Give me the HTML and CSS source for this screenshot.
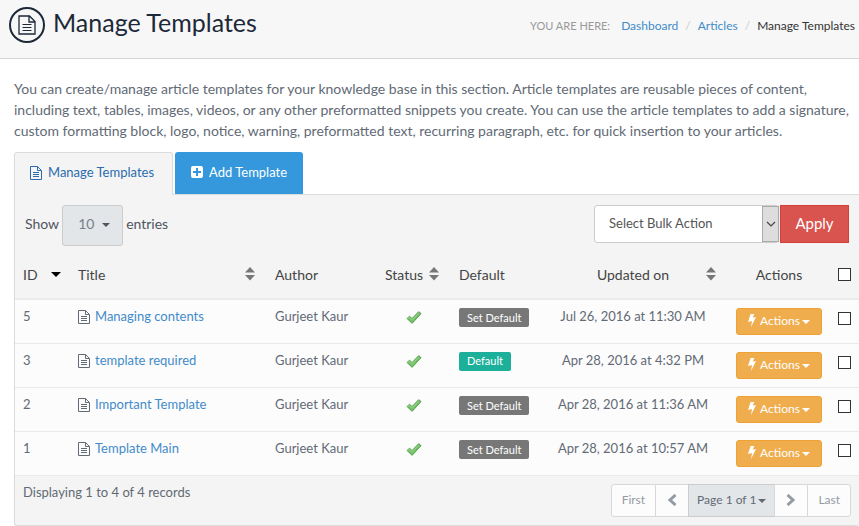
FILE: index.html
```html
<!DOCTYPE html>
<html lang="en">
<head>
    <meta charset="UTF-8">
    <meta name="viewport" content="width=device-width, initial-scale=1.0">
    <title>Manage Templates</title>
    <link rel="stylesheet" href="styles.css">
</head>
<body>
    <!-- shared icons -->
    <svg class="sprite" aria-hidden="true">
        <symbol id="i-file" viewBox="0 0 12 14">
            <path d="M.5.5h7l4 4v9H.5zM7.5.5v4h4" fill="none" stroke="currentColor"/>
            <path d="M3 6.5h6M3 8.5h6M3 10.5h6" stroke="currentColor"/>
        </symbol>
        <symbol id="i-page" viewBox="0 0 18 20">
            <path d="M1 1h10.500l5.500 5.500V19H1zM11 1v6h6" fill="none" stroke="currentColor" stroke-width="1.300"/>
            <path d="M4.500 9.500h9M4.500 12.500h9M4.500 15.500h9" stroke="currentColor"/>
        </symbol>
        <symbol id="i-plus" viewBox="0 0 12 12">
            <path fill-rule="evenodd" d="M2 0h8a2 2 0 0 1 2 2v8a2 2 0 0 1-2 2H2a2 2 0 0 1-2-2V2a2 2 0 0 1 2-2zM5 2v3H2v2h3v3h2V7h3V5H7V2z" fill="currentColor"/>
        </symbol>
        <symbol id="i-caret" viewBox="0 0 8 4">
            <path d="M0 0h8L4 4z" fill="currentColor"/>
        </symbol>
        <symbol id="i-sort" viewBox="0 0 10 14">
            <path d="M0 5.500h10L5 0zM0 8h10l-5 5.500z" fill="currentColor"/>
        </symbol>
        <symbol id="i-bolt" viewBox="0 0 8 13">
            <path d="M2.600 0h3.600L4.800 3.800 8 3.100 3 13l1-6-4 1z" fill="currentColor"/>
        </symbol>
        <symbol id="i-check" viewBox="0 0 14 12">
            <path d="M.600 7L2.800 4.800l2.400 2.100L11.300.600l2.200 1.800L5.300 11.400z" fill="#6cc25f" stroke="#4f9148" stroke-width=".8"/>
            <path d="M1.900 6.900l1-.9 2.400 2.200L11.500 1.900" fill="none" stroke="#8fd382"/>
        </symbol>
        <symbol id="i-prev" viewBox="0 0 10 12">
            <path d="M8.500 1L3 6l5.500 5" fill="none" stroke="currentColor" stroke-width="3"/>
        </symbol>
        <symbol id="i-next" viewBox="0 0 10 12">
            <path d="M1.500 1L7 6l-5.500 5" fill="none" stroke="currentColor" stroke-width="3"/>
        </symbol>
        <symbol id="i-down" viewBox="0 0 10 6">
            <path d="M1 1l4 4 4-4" fill="none" stroke="currentColor" stroke-width="1.200"/>
        </symbol>
    </svg>

    <header class="page-header">
        <h1><span class="circle"><svg width="18" height="20"><use href="#i-page"/></svg></span>Manage Templates</h1>
        <nav class="breadcrumb">
            <span class="here">YOU ARE HERE:</span>
            <a href="#">Dashboard</a>
            <span class="sep">/</span>
            <a href="#">Articles</a>
            <span class="sep">/</span>
            <span class="current">Manage Templates</span>
        </nav>
    </header>

    <main>
        <p class="intro">You can create/manage article templates for your knowledge base in this section. Article templates are reusable pieces of content, including text, tables, images, videos, or any other preformatted snippets you create. You can use the article templates to add a signature, custom formatting block, logo, notice, warning, preformatted text, recurring paragraph, etc. for quick insertion to your articles.</p>

        <nav class="tabs">
            <a class="tab active" href="#"><svg width="12" height="14"><use href="#i-file"/></svg>Manage Templates</a>
            <a class="tab add" href="#"><svg width="12" height="12"><use href="#i-plus"/></svg>Add Template</a>
        </nav>

        <section class="panel">
            <div class="toolbar">
                <div class="length">
                    <label for="length">Show</label>
                    <span class="select-wrap">
                        <select id="length">
                            <option>10</option>
                            <option>25</option>
                            <option>50</option>
                        </select>
                        <svg class="caret" width="8" height="4"><use href="#i-caret"/></svg>
                    </span>
                    <span>entries</span>
                </div>
                <form class="bulk">
                    <span class="select-wrap">
                        <select id="bulk" aria-label="Select Bulk Action">
                            <option>Select Bulk Action</option>
                            <option>Delete</option>
                        </select>
                        <span class="arrow"><svg width="10" height="6"><use href="#i-down"/></svg></span>
                    </span>
                    <button type="button" class="apply">Apply</button>
                </form>
            </div>

            <table>
                <colgroup>
                    <col class="c-id"><col class="c-title"><col class="c-author"><col class="c-status"><col class="c-default"><col class="c-updated"><col class="c-actions"><col class="c-check">
                </colgroup>
                <thead>
                    <tr>
                        <th>ID<svg class="sort desc" width="10" height="5"><use href="#i-caret"/></svg></th>
                        <th>Title<svg class="sort" width="10" height="14"><use href="#i-sort"/></svg></th>
                        <th>Author</th>
                        <th>Status<svg class="sort" width="10" height="14"><use href="#i-sort"/></svg></th>
                        <th>Default</th>
                        <th class="center">Updated on<svg class="sort" width="10" height="14"><use href="#i-sort"/></svg></th>
                        <th class="center">Actions</th>
                        <th><input type="checkbox" aria-label="Select all"></th>
                    </tr>
                </thead>
                <tbody>
                    <tr>
                        <td>5</td>
                        <td><svg class="file" width="12" height="14"><use href="#i-file"/></svg><a href="#">Managing contents</a></td>
                        <td>Gurjeet Kaur</td>
                        <td class="center"><svg class="check" width="16" height="13"><use href="#i-check"/></svg></td>
                        <td><button type="button" class="label">Set Default</button></td>
                        <td class="center">Jul 26, 2016 at 11:30 AM</td>
                        <td><button type="button" class="actions"><svg width="8" height="13"><use href="#i-bolt"/></svg>Actions<svg class="caret" width="8" height="4"><use href="#i-caret"/></svg></button></td>
                        <td><input type="checkbox" aria-label="Select template 5"></td>
                    </tr>
                    <tr>
                        <td>3</td>
                        <td><svg class="file" width="12" height="14"><use href="#i-file"/></svg><a href="#">template required</a></td>
                        <td>Gurjeet Kaur</td>
                        <td class="center"><svg class="check" width="16" height="13"><use href="#i-check"/></svg></td>
                        <td><span class="label is-default">Default</span></td>
                        <td class="center">Apr 28, 2016 at 4:32 PM</td>
                        <td><button type="button" class="actions"><svg width="8" height="13"><use href="#i-bolt"/></svg>Actions<svg class="caret" width="8" height="4"><use href="#i-caret"/></svg></button></td>
                        <td><input type="checkbox" aria-label="Select template 3"></td>
                    </tr>
                    <tr>
                        <td>2</td>
                        <td><svg class="file" width="12" height="14"><use href="#i-file"/></svg><a href="#">Important Template</a></td>
                        <td>Gurjeet Kaur</td>
                        <td class="center"><svg class="check" width="16" height="13"><use href="#i-check"/></svg></td>
                        <td><button type="button" class="label">Set Default</button></td>
                        <td class="center">Apr 28, 2016 at 11:36 AM</td>
                        <td><button type="button" class="actions"><svg width="8" height="13"><use href="#i-bolt"/></svg>Actions<svg class="caret" width="8" height="4"><use href="#i-caret"/></svg></button></td>
                        <td><input type="checkbox" aria-label="Select template 2"></td>
                    </tr>
                    <tr>
                        <td>1</td>
                        <td><svg class="file" width="12" height="14"><use href="#i-file"/></svg><a href="#">Template Main</a></td>
                        <td>Gurjeet Kaur</td>
                        <td class="center"><svg class="check" width="16" height="13"><use href="#i-check"/></svg></td>
                        <td><button type="button" class="label">Set Default</button></td>
                        <td class="center">Apr 28, 2016 at 10:57 AM</td>
                        <td><button type="button" class="actions"><svg width="8" height="13"><use href="#i-bolt"/></svg>Actions<svg class="caret" width="8" height="4"><use href="#i-caret"/></svg></button></td>
                        <td><input type="checkbox" aria-label="Select template 1"></td>
                    </tr>
                </tbody>
            </table>

            <div class="table-footer">
                <span>Displaying 1 to 4 of 4 records</span>
                <div class="pagination">
                    <button type="button">First</button>
                    <button type="button" aria-label="Previous"><svg width="10" height="12"><use href="#i-prev"/></svg></button>
                    <button type="button" class="page">Page 1 of 1<svg class="caret" width="8" height="4"><use href="#i-caret"/></svg></button>
                    <button type="button" aria-label="Next"><svg width="10" height="12"><use href="#i-next"/></svg></button>
                    <button type="button">Last</button>
                </div>
            </div>
        </section>
    </main>
</body>
</html>
```
FILE: styles.css
```css
* {
    box-sizing: border-box;
}
body {
    margin: 0;
    font-family: Lato, "Liberation Sans", sans-serif;
    font-size: 14px;
    line-height: 21px;
    color: #626a75;
    background-color: #ffffff;
}
a {
    color: #428bca;
    text-decoration: none;
}
a:hover {
    text-decoration: underline;
}
button, select, input {
    font-family: inherit;
    margin: 0;
}
button {
    cursor: pointer;
}
.sprite {
    display: none;
}
.page-header {
    display: flex;
    justify-content: space-between;
    align-items: flex-start;
    height: 59px;
    padding: 7px 4px 0 9px;
    background-color: #f7f7f7;
    border-bottom: 1px solid #d5d5d5;
}
h1 {
    display: flex;
    gap: 8px;
    margin: 0;
    font-size: 25px;
    line-height: 30px;
    font-weight: 400;
    color: #1d2939;
}
.circle {
    display: flex;
    align-items: center;
    justify-content: center;
    width: 36px;
    height: 36px;
    border: 2px solid #1d2939;
    border-radius: 50%;
}
.breadcrumb {
    display: flex;
    gap: 7px;
    padding-top: 8px;
    font-size: 12px;
}
.here {
    margin-right: 4px;
    font-size: 11px;
    color: #999999;
}
.sep {
    color: #cccccc;
}
.current {
    color: #333333;
}
main {
    padding: 19px 0 0 14px;
}
.intro {
    margin: 0 0 11px;
}
.tabs {
    display: flex;
    gap: 2px;
}
.tab {
    display: flex;
    align-items: center;
    gap: 6px;
    height: 42px;
    padding: 0 16px 2px;
    font-size: 13px;
    border-radius: 3px 3px 0 0;
}
.tab.active {
    position: relative;
    z-index: 1;
    height: 43px;
    margin-bottom: -1px;
    padding: 0 18px 3px 15px;
    color: #2a6cae;
    background-color: #f4f4f4;
    border: 1px solid #d9dbdd;
    border-bottom: 0;
}
.tab.add {
    color: #ffffff;
    background-color: #3598dc;
}
.panel {
    background-color: #f4f4f4;
    border: 1px solid #d9dbdd;
    border-right: 0;
    border-radius: 0 0 3px 3px;
}
.toolbar {
    display: flex;
    justify-content: space-between;
    height: 56px;
    padding: 10px 10px 0;
}
.length {
    display: flex;
    align-items: center;
    gap: 3px;
    height: 41px;
    padding-bottom: 4px;
    color: #505560;
}
.select-wrap {
    position: relative;
    display: flex;
}
select {
    appearance: none;
    border: 1px solid #cccccc;
    border-radius: 3px;
    outline: none;
}
#length {
    width: 61px;
    height: 41px;
    margin-bottom: -4px;
    padding: 0 15px 4px;
    font-size: 14px;
    color: #767f89;
    background-color: #e2e6e9;
}
.length .caret {
    position: absolute;
    top: 16px;
    right: 13px;
}
.bulk {
    display: flex;
    gap: 1px;
}
#bulk {
    width: 185px;
    height: 38px;
    padding: 0 14px 2px;
    font-size: 13px;
    color: #555555;
    background-color: #ffffff;
}
.arrow {
    position: absolute;
    top: 1px;
    right: 0;
    display: flex;
    align-items: center;
    justify-content: center;
    width: 17px;
    height: 36px;
    color: #444444;
    background-color: #dddddd;
    border: 1px solid #aaaaaa;
    pointer-events: none;
}
.apply {
    width: 69px;
    height: 38px;
    padding: 0 0 2px;
    font-size: 15px;
    color: #ffffff;
    background-color: #d9534f;
    border: 1px solid #d43f3a;
}
table {
    width: 100%;
    table-layout: fixed;
    border-collapse: separate;
    border-spacing: 0;
}
.c-id { width: 55px; }
.c-title { width: auto; }
.c-author { width: 110px; }
.c-status { width: 74px; }
.c-default { width: 87px; }
.c-updated { width: 190px; }
.c-actions { width: 102px; }
.c-check { width: 29px; }
th {
    position: relative;
    height: 49px;
    padding: 0 8px;
    font-weight: 400;
    text-align: left;
    color: #444444;
    border-bottom: 2px solid #ebebeb;
}
.sort {
    position: absolute;
    top: 16px;
    right: 12px;
    color: #777777;
}
.sort.desc {
    top: 21px;
    right: 9px;
    color: #000000;
}
td {
    height: 44px;
    padding: 6px 8px 0;
    font-size: 13px;
    vertical-align: top;
    background-color: #fcfcfc;
    border-bottom: 1px solid #e9ebeb;
}
.center {
    text-align: center;
}
.file {
    margin-right: 5px;
    vertical-align: -3px;
}
.check {
    margin-top: 5px;
}
.label {
    display: inline-block;
    height: 19px;
    margin-top: 2px;
    padding: 0 8px;
    font-size: 11px;
    line-height: 18px;
    vertical-align: top;
    color: #ffffff;
    background-color: #777777;
    border: 0;
    border-radius: 2px;
}
.label.is-default {
    background-color: #1caf9a;
}
.actions {
    display: flex;
    align-items: center;
    justify-content: center;
    gap: 4px;
    width: 86px;
    height: 27px;
    margin-top: 2px;
    padding: 0 0 2px;
    font-size: 12px;
    color: #ffffff;
    background-color: #f0ad4e;
    border: 1px solid #eea236;
    border-radius: 3px;
}
.caret {
    margin-top: 2px;
}
.actions .caret,
.page .caret {
    margin-left: -2px;
}
input[type="checkbox"] {
    display: block;
    appearance: none;
    width: 13px;
    height: 13px;
    background-color: #ffffff;
    border: 1px solid #333333;
}
input[type="checkbox"]:checked {
    background-color: #428bca;
}
td input[type="checkbox"] {
    margin-top: 6px;
}
.table-footer {
    display: flex;
    justify-content: space-between;
    height: 49px;
    padding: 6px 8px 0;
    font-size: 13px;
}
.pagination {
    display: flex;
    margin-top: 2px;
}
.pagination button {
    display: flex;
    align-items: center;
    justify-content: center;
    min-width: 34px;
    height: 33px;
    margin-left: -1px;
    padding: 0 10px 2px;
    font-size: 12px;
    color: #949ba3;
    background-color: #fcfcfc;
    border: 1px solid #d6d8da;
}
.pagination button:first-child {
    border-radius: 3px 0 0 3px;
}
.pagination button:last-child {
    border-radius: 0 3px 3px 0;
}
.pagination .page {
    gap: 4px;
    padding: 0 8px 2px;
    color: #626a75;
    background-color: #e2e6e9;
    border-color: #cccccc;
}
```
